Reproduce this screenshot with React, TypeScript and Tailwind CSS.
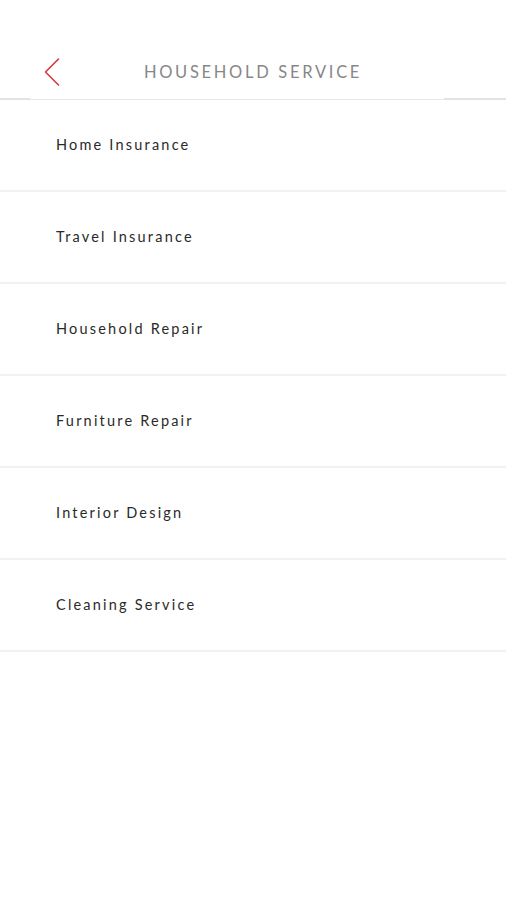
const services = [
  'Home Insurance',
  'Travel Insurance',
  'Household Repair',
  'Furniture Repair',
  'Interior Design',
  'Cleaning Service',
];

export default function App() {
  return (
    <div className="w-[506px] h-[900px] bg-white font-['Lato',sans-serif]">
      {/* Header */}
      <div className="relative h-[100px] border-b border-[#e9e9e9]">
        <div className="absolute left-0 bottom-[-1px] w-[30px] h-[2px] bg-[#e3e3e3]" />
        <div className="absolute right-0 bottom-[-1px] w-[62px] h-[2px] bg-[#e3e3e3]" />
        <div className="flex items-center h-full pt-[45px]">
          <button className="ml-[44px] w-[16px] h-[28px] flex items-center">
            <svg width="16" height="28" viewBox="0 0 16 28" fill="none">
              <polyline
                points="14.5,1 1.5,14 14.5,27"
                stroke="#d9373c"
                strokeWidth="1.6"
                strokeLinecap="round"
                strokeLinejoin="round"
              />
            </svg>
          </button>
          <h1 className="flex-1 text-center pr-[60px] text-[16.5px] tracking-[2.7px] text-[#878787]">
            HOUSEHOLD SERVICE
          </h1>
        </div>
      </div>

      {/* List */}
      <ul>
        {services.map((s) => (
          <li
            key={s}
            className="h-[92px] flex items-center pl-[56px] border-b-2 border-[#f2f2f2] text-[14.5px] tracking-[2.2px] text-[#2a2a2a]"
          >
            {s}
          </li>
        ))}
      </ul>
    </div>
  );
}
